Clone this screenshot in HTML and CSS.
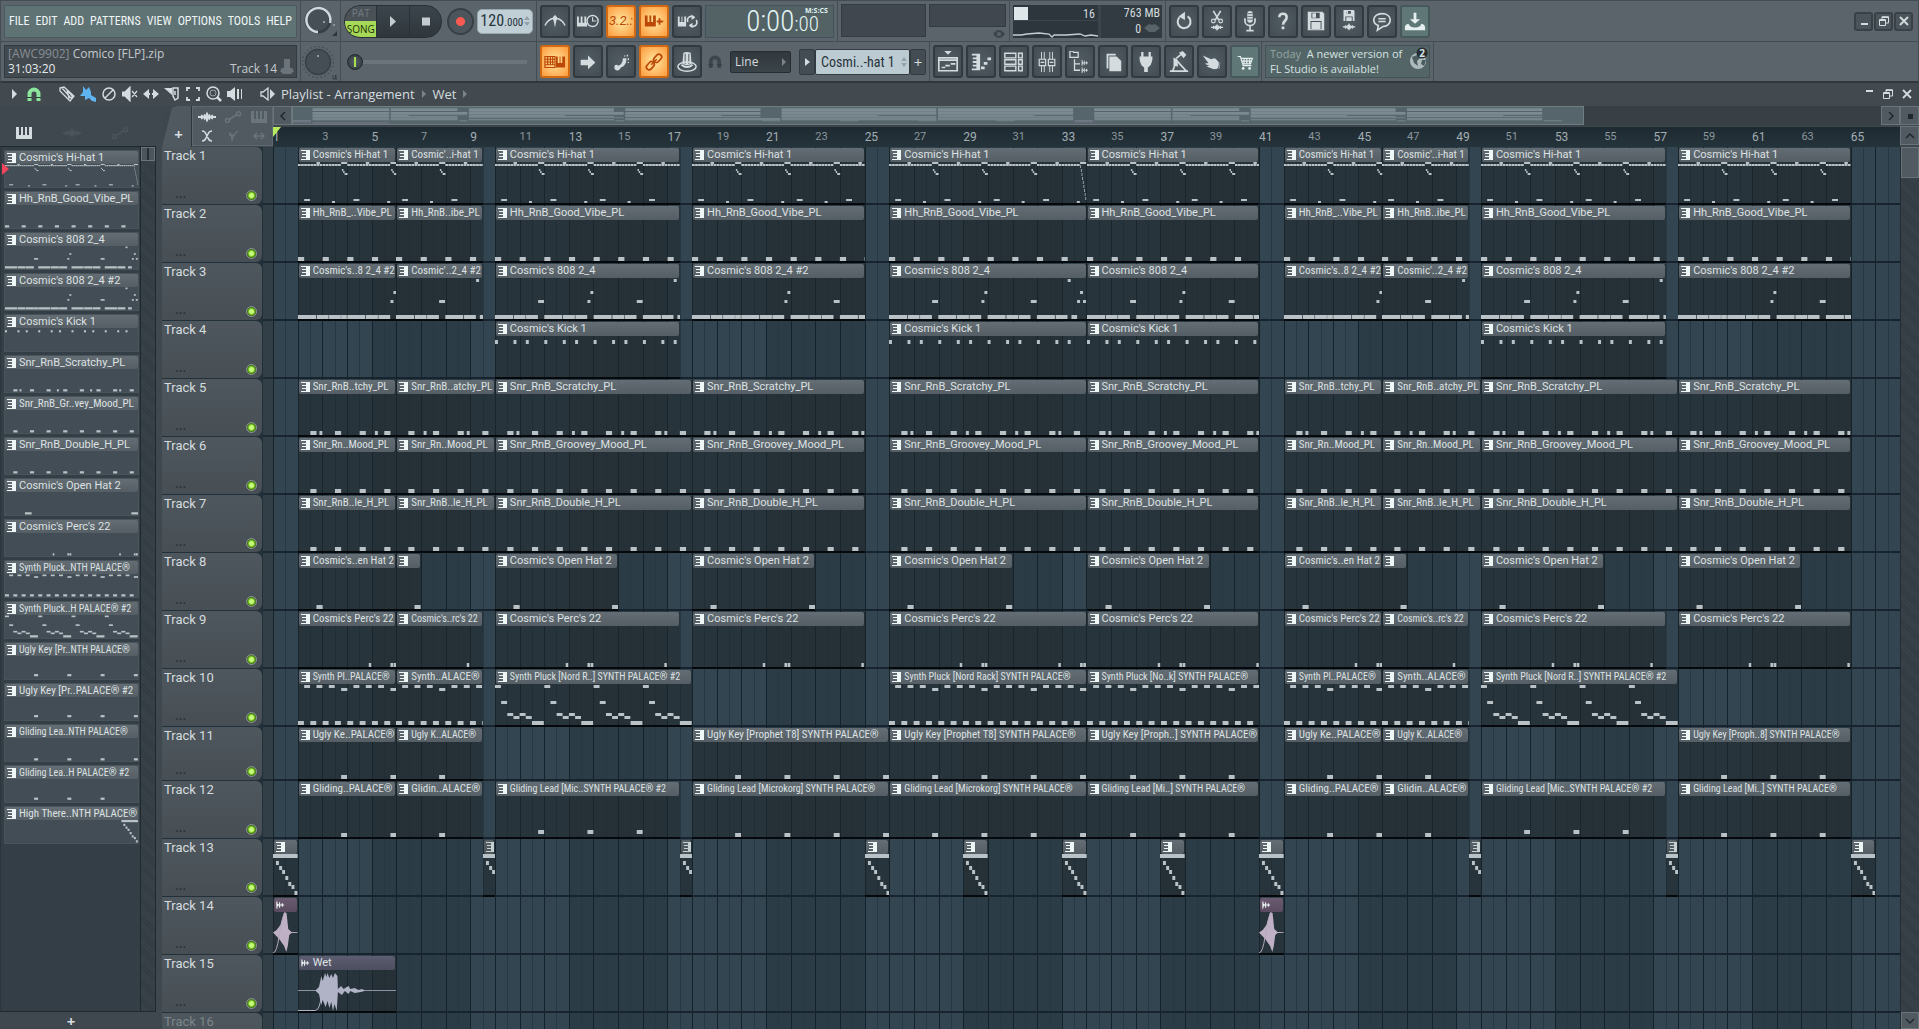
FILE: index.html
```html
<!DOCTYPE html>
<html lang="en">
<head>
<meta charset="utf-8">
<title>Comico [FLP].zip</title>
<link rel="stylesheet" href="styles.css">
</head>
<body>
<svg class="defs" aria-hidden="true">
  <symbol id="clip-icon" viewBox="0 0 9 10"><path d="M0 0h9v10H0V9h5V7H1V6h4V4H1V3h4V1H0z"/></symbol>
  <symbol id="wave-mark" viewBox="0 0 10 10"><path d="M1 1v8M4 2v6M4 5h5M7 3v4" fill="none" stroke="currentColor" stroke-width="1.2"/><path d="M1 3l3 2-3 2z"/></symbol>
  <symbol id="keys" viewBox="0 0 16 12"><path d="M0 0h3v8h2V0h2v8h2V0h2v8h2V0h3v12H0z"/></symbol>
  <symbol id="wave" viewBox="0 0 20 12"><path d="M0 5l3 0 1-2 2 2 1-3 1 2 2-4 2 4 1-2 1 3 2-2 1 2 3 0v2h-3l-1 2-2-2-1 3-1-2-2 4-2-4-1 2-1-3-2 2-1-2H0z"/></symbol>
  <symbol id="auto" viewBox="0 0 18 12"><path d="M5 8.500l8-5" stroke="currentColor" stroke-width="1.500"/><circle cx="3.500" cy="9.500" r="2" fill="none" stroke="currentColor" stroke-width="1.500"/><circle cx="14.500" cy="2.800" r="2" fill="none" stroke="currentColor" stroke-width="1.500"/></symbol>
  <symbol id="magnet" viewBox="0 0 14 15"><path d="M2.500 14V7a4.500 4.500 0 0 1 9 0v7" fill="none" stroke="currentColor" stroke-width="4"/><path d="M0 10.500h5M9 10.500h5" stroke="#31393f" stroke-width="1"/></symbol>
  <symbol id="restore" viewBox="0 0 10 10"><path d="M.5 3.500h6v6h-6zM.5 4.500h6M3 3V.7h6.500V7H7M3 1.500h6" fill="none" stroke="currentColor"/></symbol>
  <symbol id="cross" viewBox="0 0 10 10"><path d="M1 1l8 8M9 1L1 9" stroke="currentColor" stroke-width="1.800"/></symbol>
  <symbol id="updown" viewBox="0 0 6 10"><path d="M0 4l3-4 3 4zM0 6l3 4 3-4z"/></symbol>
</svg>

<header class="toolbar">
  <div class="bar">
    <div class="cell w-main"><nav class="menu"><a href="#">FILE</a><a href="#">EDIT</a><a href="#">ADD</a><a href="#">PATTERNS</a><a href="#">VIEW</a><a href="#">OPTIONS</a><a href="#">TOOLS</a><a href="#">HELP</a></nav></div>
    <div class="cell w-knob"><button class="knob" aria-label="Main volume"><svg viewBox="0 0 36 36"><circle cx="17" cy="17" r="10.500" fill="#464f56"/><circle cx="17" cy="17" r="12" fill="none" stroke="#363e44" stroke-width="3"/><path d="M17 29a12 12 0 1 1 12-9" fill="none" stroke="#cfd9dd" stroke-width="2.500"/><circle cx="23" cy="19" r="1" fill="#aab5bb"/><circle cx="33" cy="22" r="1" fill="#98a3a9"/><path d="M36 28v5h-5z" fill="#2f373c"/></svg></button></div>
    <div class="cell w-play">
      <div class="transport">
        <div class="mode"><button class="pat">PAT</button><button class="song">SONG</button></div>
        <button aria-label="Play"><svg viewBox="0 0 24 24"><path d="M9 7l6 5.500L9 18z"/></svg></button>
        <button aria-label="Stop"><svg viewBox="0 0 24 24"><path d="M8 8.500h8v8H8z"/></svg></button>
      </div>
      <button class="record" aria-label="Record"></button>
      <button class="tempo"><span>120<small>.000</small></span><svg><use href="#updown"/></svg></button>
    </div>
    <div class="cell w-time">
      <button class="tb" aria-label="Metronome"><svg viewBox="0 0 24 24"><path d="M1 17q3-7 10-8M23 17q-3-7-10-8" fill="none" stroke="currentColor" stroke-width="1.500"/><path d="M12 5l2 4-2 10-2-10z"/><circle cx="12" cy="9" r="2.500"/></svg></button>
      <button class="tb" aria-label="Wait for input"><svg viewBox="0 0 24 24"><path d="M0 7h2v7h2V7h2v7h2V7h2v7h1v4H0z"/><circle cx="17" cy="12" r="6" fill="#454f55" stroke="currentColor" stroke-width="1.500"/><path d="M17 8v4h4" fill="none" stroke="currentColor" stroke-width="1.200"/></svg></button>
      <button class="tb on count">3.2.:</button>
      <button class="tb on" aria-label="Blend recording"><svg viewBox="0 0 24 24"><path d="M2 6h3v7h2V6h2v7h2V6h3v12H2z"/><path d="M18 9v7M15 12.500h7" stroke="currentColor" stroke-width="2"/></svg></button>
      <button class="tb" aria-label="Loop recording"><svg viewBox="0 0 24 24"><path d="M2 7h2v6h2V7h1v6h2V7h2v11H2z"/><path d="M13 13a4 4 0 0 1 7-4M22 11a4 4 0 0 1-7 5" fill="none" stroke="currentColor" stroke-width="1.800"/><path d="M17 5l4 3-4 3zM18 14l-4 3 4 3z"/></svg></button>
      <div class="clock"><em>M:S:CS</em><span>0:00<small>:00</small></span></div>
    </div>
    <div class="cell w-scope"><div class="scope big"></div><div class="scope small"></div><svg class="eye" viewBox="0 0 12 10"><path d="M0 5q6-8 12 0q-6 8-12 0z"/><circle cx="6" cy="5" r="2" fill="#5b646b"/></svg></div>
    <div class="cell w-cpu">
      <div class="cpu">
        <svg class="meter" viewBox="0 0 85 33"><path d="M1 2h14v13H1z" fill="#dfe6e9"/><path d="M0 15.500h85" stroke="#3b454b"/><path d="M0 30h8l6-1 12-1 10 1 3 3 2-2 12 0 14-1 5 2 6-1 7 1" fill="none" stroke="#c4cdd1" stroke-width="1.300"/></svg>
        <span class="voices">16</span>
        <div class="mem"><span>763 MB</span><span>0 <svg viewBox="0 0 16 10"><path d="M0 5l5-4 3 1 3-1 5 4-5 4H5z"/></svg></span></div>
      </div>
    </div>
    <div class="cell grow">
      <button class="tb" aria-label="Undo"><svg viewBox="0 0 24 24"><path d="M7 8a7 7 0 1 0 9-1" fill="none" stroke="currentColor" stroke-width="2.200"/><path d="M13 2v9L6 7z"/></svg></button>
      <button class="tb" aria-label="Cut"><svg viewBox="0 0 24 24"><path d="M8 1l6 10M16 1l-6 10" stroke="currentColor" stroke-width="1.800"/><circle cx="8" cy="12" r="2" fill="none" stroke="currentColor" stroke-width="1.300"/><circle cx="16" cy="12" r="2" fill="none" stroke="currentColor" stroke-width="1.300"/><use href="#wave" x="5" y="15" width="14" height="8"/></svg></button>
      <button class="tb" aria-label="Record audio"><svg viewBox="0 0 24 24"><rect x="9" y="1" width="6" height="13" rx="3"/><path d="M6.500 9v3a5.500 5 0 0 0 11 0V9M12 17v5M8 22.500h8" fill="none" stroke="currentColor" stroke-width="1.800"/><path d="M9 4h6M9 7h6M9 10h6" stroke="#59636a"/></svg></button>
      <button class="tb" aria-label="Help"><svg viewBox="0 0 24 24"><path d="M8 8q0-4 4-4t4 4q0 2-2 4t-2 4" fill="none" stroke="currentColor" stroke-width="2.800"/><path d="M10.500 18h3v3h-3z"/></svg></button>
      <button class="tb" aria-label="Save"><svg viewBox="0 0 24 24"><path d="M3 2h16l2 2v18H3z"/><path d="M7 3h9v6H7zM6 12h12v9H6z" fill="#454f55"/><path d="M8 3.500h4v5H8zM7 13h10v8H7z"/></svg></button>
      <button class="tb" aria-label="Save new version"><svg viewBox="0 0 24 24"><path d="M6 0h11l1 1v11H6z"/><path d="M9 1h5v3H9zM8 7h8v5H8z" fill="#454f55"/><path d="M9 8h6v4H9zM9 1h2v3H9z"/><use href="#wave" x="5" y="14" width="14" height="9"/></svg></button>
      <button class="tb" aria-label="Chat"><svg viewBox="0 0 24 24"><path d="M12 4c5 0 9 2.500 9 7s-4 7-8 7l-6 4 1-5c-3-1-5-3-5-6 0-4.500 4-7 9-7z" fill="none" stroke="currentColor" stroke-width="1.800"/><path d="M8 9.500h8M8 12.500h8" stroke="currentColor" stroke-width="1.500"/></svg></button>
      <button class="tb teal" aria-label="Download"><svg viewBox="0 0 24 24"><path d="M10.500 3h3v7h4L12 15 6.500 10h4z"/><path d="M1 19q0-3 4-4 1 4 7 4t7-4q4 1 4 4v3H1z"/></svg></button>
      <div class="winbtns">
        <button aria-label="Minimize"><svg viewBox="0 0 10 10"><path d="M2 7h7v2H2z"/></svg></button>
        <button aria-label="Restore"><svg><use href="#restore"/></svg></button>
        <button aria-label="Close"><svg><use href="#cross"/></svg></button>
      </div>
    </div>
  </div>
  <div class="bar">
    <div class="cell w-main"><div class="hint"><div><i>[AWC9902]</i> Comico [FLP].zip</div><div class="hint-row"><b>31:03:20</b><span>Track 14</span></div><svg viewBox="0 0 14 16"><path d="M4 1h6v9h2l2 3-3 3H3l-3-3 2-3h2z"/></svg></div></div>
    <div class="cell w-knob"><button class="knob" aria-label="Main pitch"><svg viewBox="0 0 36 36"><circle cx="17" cy="18" r="15.500" fill="none" stroke="#454e55" stroke-width="1.500" stroke-dasharray="1.500 2.560"/><circle cx="17" cy="18" r="12.500" fill="#454e55" stroke="#373f45" stroke-width="1.500"/><circle cx="17" cy="12" r="1" fill="#aab5bb"/><path d="M32 31v4h5M34.500 31v4M36 31v4" stroke="#343c41" fill="none"/></svg></button></div>
    <div class="cell w-play"><input class="seek" type="range" min="0" max="100" value="0" aria-label="Song position"></div>
    <div class="cell w-snap">
      <button class="tb on" aria-label="Typing keyboard"><svg viewBox="0 0 24 24"><path d="M1 6h11v12H1zM1 9h11M1 12h11M1 15h11M4 6v9M7 6v9M9.500 6v9" fill="none" stroke="currentColor" stroke-width="1.300"/><path d="M13 6h2v7h2V6h1v7h2V6h3v12H13z"/></svg></button>
      <button class="tb" aria-label="Step"><svg viewBox="0 0 24 24"><path d="M4 9.500h8V5l8 7.500-8 7.500v-4.500H4z"/></svg></button>
      <button class="tb" aria-label="Slide"><svg viewBox="0 0 24 24"><path d="M5 16q2-2 4 0 5-1 5-8l4 0q0 8-6 10-2 4-5 3-3-1-2-5z"/><path d="M16 5v1M19 4v2M20 8v2M20 12v1" stroke="currentColor" stroke-width="1.500"/></svg></button>
      <button class="tb on" aria-label="Link"><svg viewBox="0 0 24 24"><g fill="none" stroke="currentColor" stroke-width="1.800"><rect x="11" y="5" width="10" height="6" rx="3" transform="rotate(-48 16 8)"/><rect x="3" y="13" width="10" height="6" rx="3" transform="rotate(-48 8 16)"/><path d="M9 15l6-6"/></g></svg></button>
      <button class="tb" aria-label="Touch"><svg viewBox="0 0 24 24"><path d="M8 2q4-2 8 0l1 12q-5 3-10 0z"/><path d="M10 3v11M14 3v11" stroke="#454f55"/><ellipse cx="12" cy="17" rx="10" ry="5" fill="none" stroke="currentColor" stroke-width="1.600"/><path d="M6 15q6 5 12 0" stroke="currentColor" fill="none" stroke-width="2"/></svg></button>
      <svg class="snapmag"><use href="#magnet"/></svg>
      <div class="snapbox"><select class="snap" aria-label="Snap"><option>Line</option></select><i class="tri"></i></div>
      <div class="pattern"><button aria-label="Pattern list"><svg viewBox="0 0 6 10"><path d="M1 1l5 4-5 4z"/></svg></button><button class="pname"><span>Cosmi..-hat 1</span><svg><use href="#updown"/></svg></button><button>+</button></div>
    </div>
    <div class="cell w-views">
      <button class="tb" aria-label="Playlist"><svg viewBox="0 0 24 24"><path d="M8 0h8l-4 4z"/><path d="M2 7.500h20v14H2zM2 10h20M5 18h4M9 16h5M15 14h5" fill="none" stroke="currentColor" stroke-width="1.800"/></svg></button>
      <button class="tb" aria-label="Piano roll"><svg viewBox="0 0 24 24"><path d="M2 3h9v18H2v-2h5v-2H3v-2h4v-2H3v-2h4V9H3V7h4V5H2zM12 17h4v3h-4zM15 12h4v3h-4zM19 7h4v3h-4z"/></svg></button>
      <button class="tb" aria-label="Channel rack"><svg viewBox="0 0 24 24"><path d="M2 2.500h12v5H2zM17 2.500h4v5h-4zM2 9.500h12v5H2zM17 9.500h4v5h-4zM2 16.500h12v5H2zM17 16.500h4v5h-4z" fill="none" stroke="currentColor" stroke-width="1.500"/></svg></button>
      <button class="tb" aria-label="Mixer"><svg viewBox="0 0 24 24"><path d="M6 1v8M9 1v8M6 16v7M9 16v7M15 1v8M18 1v8M15 16v7M18 16v7" stroke="currentColor" stroke-width="1"/><path d="M3.500 9h7v7h-7zM13.500 9h7v7h-7zM5 12.500h4M15 12.500h4" fill="none" stroke="currentColor" stroke-width="1.300"/></svg></button>
      <button class="tb" aria-label="Browser"><svg viewBox="0 0 24 24"><path d="M1 0h3l1 1.500h5V7H1zM6 9v12h6M6 14h6" fill="none" stroke="currentColor" stroke-width="1.400"/><use href="#wave-mark" x="12" y="9" width="11" height="8"/><use href="#wave-mark" x="12" y="17" width="11" height="8"/></svg></button>
      <button class="tb" aria-label="Project picker"><svg viewBox="0 0 24 24"><path d="M5 3h10v2H7v14H5z"/><path d="M8 6h8l5 5v11H8z"/></svg></button>
      <button class="tb" aria-label="Plugins"><svg viewBox="0 0 24 24"><path d="M8 1v6M16 1v6" stroke="currentColor" stroke-width="2.500"/><path d="M5 6h14v3q-1 7-5 9v5h-4v-5Q6 16 5 9z"/></svg></button>
      <button class="tb" aria-label="Tempo tapper"><svg viewBox="0 0 24 24"><path d="M5 22l3-8M9 8l5-4M9 10l11 12M2 22h20" fill="none" stroke="currentColor" stroke-width="1.800"/><path d="M12 2l4-2 4 4-3 4zM6 7l4 2 1 8-5-1z"/></svg></button>
      <button class="tb" aria-label="Touch control"><svg viewBox="0 0 24 24"><path d="M2 5l9 4 4-1 6 5-1 6-6 1-8-3 3-1-5-2 4-1z"/><path d="M18 9q4 5 0 11" fill="none" stroke="#454f55"/></svg></button>
      <button class="tb teal" aria-label="Shop"><svg viewBox="0 0 24 24"><path d="M4 6h3l3 10h9M7 8h13l-2 6H9M11 8v6M14 8v6M17 8v6M8 11h11" fill="none" stroke="currentColor" stroke-width="1.300"/><circle cx="10" cy="19" r="1.500"/><circle cx="17" cy="19" r="1.500"/></svg></button>
    </div>
    <div class="cell w-news"><div class="news"><div><i>Today</i>&nbsp; A newer version of<br>FL Studio is available!</div><svg viewBox="0 0 20 22"><circle cx="9" cy="13" r="8" fill="#aebbbd"/><path d="M3 9l5-2 3 3-3 3 1 5-4-3zM13 12l4 0-2 6-3-2z" fill="#4c5c5f"/><circle cx="13" cy="5" r="5.500" fill="#252d32"/></svg><b>2</b></div></div>
    <div class="cell grow"></div>
  </div>
</header>

<section class="titlebar">
  <svg class="ti dim" viewBox="0 0 16 16"><path d="M7 3l5 5-5 5z"/></svg>
  <svg class="ti green" viewBox="0 0 16 16"><use href="#magnet" x="1" y="1" width="14" height="15"/></svg>
  <span class="spacer"></span>
  <svg class="ti" viewBox="0 0 16 16"><path d="M1 2l4-1 10 9-4 5L1 5zM3 2l8 9M8 4l6 7-4 1z" fill="none" stroke="currentColor" stroke-width="1.300"/></svg>
  <svg class="ti blue" viewBox="0 0 16 16"><path d="M3 0l3 4 3-3 2 5 0 3 5 3v4l-4-1-3-3-4 2 0-4-5 0 3-4z"/></svg>
  <svg class="ti" viewBox="0 0 16 16"><circle cx="8" cy="8" r="6" fill="none" stroke="currentColor" stroke-width="1.500"/><path d="M4 12l8-8" stroke="currentColor" stroke-width="1.500"/></svg>
  <svg class="ti" viewBox="0 0 16 16"><path d="M0 6h3l5-5v14l-5-5H0zM10 5l5 6M15 5l-5 6" stroke="currentColor" stroke-width="1.200"/></svg>
  <svg class="ti" viewBox="0 0 16 16"><path d="M0 8l6-5v4h1v2H6v4zM16 8l-6-5v4H9v2h1v4z"/></svg>
  <svg class="ti" viewBox="0 0 16 16"><path d="M0 2h8v7z"/><path d="M9 2h5v10l-3 2-2-4zM11 5v4" fill="none" stroke="currentColor" stroke-width="1.500"/></svg>
  <svg class="ti" viewBox="0 0 16 16"><path d="M2 5V2h3M11 2h3v3M14 11v3h-3M5 14H2v-3" fill="none" stroke="currentColor" stroke-width="1.800"/></svg>
  <svg class="ti" viewBox="0 0 16 16"><circle cx="7" cy="7" r="6" fill="none" stroke="currentColor" stroke-width="1.500"/><circle cx="7" cy="7" r="3" fill="none" stroke="currentColor" opacity=".6"/><path d="M11 11l4 4" stroke="currentColor" stroke-width="2.500"/></svg>
  <svg class="ti" viewBox="0 0 16 16"><path d="M0 5h3l5-4v14l-5-4H0zM10 3h2v10h-2zM14 3h1v10h-1z"/></svg>
  <span class="spacer"></span>
  <svg class="ti" viewBox="0 0 16 16"><path d="M1 6h2l5-4v12l-5-4H1z" fill="none" stroke="currentColor" stroke-width="1.300"/><path d="M10 3l5 5-5 5z"/></svg>
  <span class="crumb">Playlist - Arrangement</span><i class="tri"></i><span class="crumb">Wet</span><i class="tri"></i>
  <div class="winmini"><button aria-label="Minimize playlist"><svg viewBox="0 0 10 10"><path d="M2 1h7v2H2z"/></svg></button><button aria-label="Restore playlist"><svg><use href="#restore"/></svg></button><button aria-label="Close playlist"><svg><use href="#cross"/></svg></button></div>
</section>

<main class="playlist">
  <aside class="picker">
    <div class="picker-tabs"><svg><use href="#keys"/></svg><svg class="off"><use href="#wave"/></svg><svg class="off"><use href="#auto"/></svg></div>
    <div class="picker-body"><ul id="patterns"></ul><div class="pscroll"><i></i></div></div>
    <button class="add" aria-label="Add pattern">+</button>
  </aside>
  <section class="arrange">
    <div class="head">
      <button class="addtrack" aria-label="Add track">+</button>
      <div class="kinds"><svg><use href="#wave"/></svg><svg class="off"><use href="#auto"/></svg><svg class="off"><use href="#keys"/></svg><svg viewBox="0 0 18 12"><path d="M4 1q3 0 4 3l2 4q1 3 4 3M14 1q-3 0-4 3L8 8q-1 3-4 3" fill="none" stroke="currentColor" stroke-width="1.500"/></svg><svg class="off2" viewBox="0 0 18 12"><path d="M5 3q3 0 3 8 1-7 6-10M5 5h6" fill="none" stroke="currentColor" stroke-width="1.300"/></svg><svg class="off2" viewBox="0 0 18 12"><path d="M4 6h10M7 3L4 6l3 3M11 3l3 3-3 3" fill="none" stroke="currentColor" stroke-width="1.500"/></svg></div>
      <div class="timeline">
        <div class="scroller"><button class="sb" aria-label="Scroll left"><svg viewBox="0 0 10 10"><path d="M7 1L3 5l4 4" fill="none" stroke="currentColor" stroke-width="1.500"/></svg></button><div class="strip"><svg id="overview" viewBox="0 0 66 19" preserveAspectRatio="none"></svg></div><button class="sb" aria-label="Scroll right"><svg viewBox="0 0 10 10"><path d="M3 1l4 4-4 4" fill="none" stroke="currentColor" stroke-width="1.500"/></svg></button></div>
        <div class="ruler" id="ruler"></div>
      </div>
      <div class="corner"><button class="sb" aria-label="Zoom"><svg viewBox="0 0 10 10"><path d="M3 3h5v5H3z"/></svg></button><button class="sb" aria-label="Scroll up"><svg viewBox="0 0 10 10"><path d="M1 7l4-4 4 4" fill="none" stroke="currentColor" stroke-width="1.500"/></svg></button></div>
    </div>
    <div class="body">
      <div class="tracks" id="tracks"></div>
      <div class="vscroll"><div class="thumb"></div><button class="sb" aria-label="Scroll down"><svg viewBox="0 0 10 10"><path d="M1 3l4 4 4-4" fill="none" stroke="currentColor" stroke-width="1.500"/></svg></button></div>
    </div>
  </section>
</main>
<script src="script.js"></script>
</body>
</html>
```
FILE: styles.css
```css
:root {
  --ui: "Open Sans", "Noto Sans", sans-serif;
  --narrow: "Roboto Condensed", "Noto Sans CJK JP", "Roboto", sans-serif;
  --label: "Roboto", sans-serif;
  --panel: #5b646b;
  --line: #454d54;
  --ink: #d5dcdf;
}
* { box-sizing: border-box; }
body { margin: 0; height: 100vh; display: flex; flex-direction: column; overflow: hidden; background: #3f474e; color: var(--ink); font: 12px/16px var(--ui); }
button, select, input { font: inherit; color: inherit; margin: 0; padding: 0; border: 0; background: none; }
a { color: inherit; text-decoration: none; }
i, em { font-style: normal; }
svg { fill: currentColor; display: block; flex: none; }
.defs { position: absolute; width: 0; height: 0; }

/* main toolbar */
.toolbar { background: var(--panel); border: 1px solid var(--line); border-bottom: 2px solid #30383d; flex: none; }
.bar { display: flex; height: 40px; }
.bar + .bar { border-top: 1px solid var(--line); }
.cell { display: flex; align-items: center; gap: 3px; padding: 0 3px; border-right: 1px solid var(--line); flex: none; }
.w-main { width: 300px; }
.w-knob { width: 40px; padding: 0; }
.w-play { width: 196px; }
.w-time { width: 301px; }
.w-scope { width: 172px; align-items: flex-start; padding-top: 3px; position: relative; }
.w-cpu { width: 156px; }
.w-snap { width: 393px; }
.w-views { width: 332px; }
.w-news { width: 172px; }
.cell.grow { flex: 1; border-right: 0; }
.menu { flex: 1; height: 33px; display: flex; align-items: center; justify-content: space-between; padding: 0 4px; background: #5f7375; border: 1px solid #4a5a5d; color: #f0f6f6; font: 12px/30px var(--narrow); }
.hint { position: relative; flex: 1; height: 33px; background: #42494f; border: 1px solid #333a40; padding: 0 3px; line-height: 15px; color: #c3cacd; }
.hint i { color: #878f94; }
.hint b { font-weight: 400; color: #e4eaec; }
.hint-row { display: flex; justify-content: space-between; padding-right: 16px; }
.hint svg { position: absolute; right: 2px; bottom: 3px; width: 14px; height: 16px; color: #6b747a; }
.knob svg { width: 36px; height: 36px; }
.transport { display: flex; height: 33px; width: 99px; border-radius: 16px; overflow: hidden; background: linear-gradient(#3c454b, #2f373d); border: 1px solid #2a3136; color: #c5ccd0; }
.transport > * { flex: 1; border-right: 1px solid #293036; display: flex; align-items: center; justify-content: center; }
.transport > :last-child { border: 0; }
.transport svg { width: 24px; height: 24px; }
.transport .mode { flex-direction: column; align-items: stretch; font: 10px/16px var(--ui); }
.mode button { flex: 1; }
.pat { background: #4a5258; color: #727b80; }
.song { background: #a6d957; color: #1f3008; }
.record { width: 27px; height: 27px; border-radius: 50%; border: 2px solid #373f45; background: radial-gradient(circle, #fb5a50 4px, #4c555b 5px); margin-left: 2px; flex: none; }
.tempo { display: flex; align-items: center; justify-content: space-between; width: 56px; height: 25px; padding: 0 2px; border-radius: 5px; background: #c0cfd6; color: #27343b; border: 1px solid #98a6ad; font: 16px/23px var(--narrow); white-space: nowrap; }
.tempo small { font-size: 11px; }
.tempo svg, .pname svg { width: 6px; height: 10px; color: #94a2a9; }
.tb { width: 30px; height: 33px; flex: none; display: flex; align-items: center; justify-content: center; border-radius: 3px; border: 2px solid #323a40; background: radial-gradient(#525c63, #434c53); color: #d5dcdf; }
.tb svg { width: 22px; height: 22px; }
.tb.on { border-color: #d26a14; background: radial-gradient(#ffe79f, #fd9a3c); color: #bb4806; }
.tb.teal { border-color: #46585a; background: #5f7776; color: #e6efef; }
.tb.count { font: italic 13px/20px var(--label); }
.clock { width: 129px; height: 33px; background: #526265; border: 1px solid #43525a; display: flex; flex-direction: row-reverse; align-items: flex-start; color: #e2f3f2; font: 300 29px/31px var(--narrow); }
.clock small { font-size: 21px; }
.clock em { width: 26px; margin: 1px 2px 0 -14px; font: 700 7px/7px var(--ui); }
.scope { background: #40474e; border: 1px solid #343b41; }
.scope.big { width: 86px; height: 33px; }
.scope.small { width: 78px; height: 23px; }
.eye { position: absolute; right: 4px; bottom: 2px; width: 12px; height: 10px; color: #3c454b; }
.cpu { flex: 1; height: 33px; display: flex; background: #2d363d; position: relative; font: 12px/16px var(--narrow); }
.meter { width: 85px; height: 33px; }
.voices { position: absolute; left: 70px; top: 1px; }
.mem { flex: 1; background: #323b41; text-align: right; display: flex; flex-direction: column; padding-right: 2px; border-left: 3px solid #3b454b; }
.mem svg { display: inline; width: 16px; height: 10px; color: #59636a; }
.winbtns { margin-left: auto; display: flex; gap: 1px; padding-right: 2px; }
.winbtns button { width: 19px; height: 19px; display: grid; place-items: center; border: 2px solid #394147; border-radius: 3px; background: #4b545a; }
.winbtns svg, .winmini svg { width: 10px; height: 10px; }
.seek { appearance: none; width: 180px; height: 24px; margin-left: 3px; background: linear-gradient(#6b747b, #6b747b) center / 100% 4px no-repeat; }
.seek::-webkit-slider-thumb { appearance: none; width: 16px; height: 16px; border-radius: 50%; border: 1px solid #21282c; background: linear-gradient(90deg, transparent 6px, #a9e04f 6px 8px, transparent 8px) center / 100% 10px no-repeat, radial-gradient(#576067, #2d353a); }
.snapmag { width: 14px; height: 14px; margin: 0 5px 0 3px; color: #3c454b; }
.snapbox { display: flex; align-items: center; width: 62px; height: 22px; padding-right: 4px; border: 1px solid #262d32; border-radius: 2px; background: linear-gradient(#31393e, #3b444a); }
.snap { appearance: none; flex: 1; padding: 0 4px; line-height: 20px; }
.pattern { display: flex; margin-left: 5px; height: 26px; }
.pattern button { width: 16px; background: #434c53; border: 1px solid #333b41; display: grid; place-items: center; border-radius: 2px; font-size: 15px; }
.pattern button svg { width: 6px; height: 10px; }
.pattern .pname { width: 95px; display: flex; align-items: center; justify-content: space-between; padding: 0 2px 0 5px; background: #bccbd2; color: #27343b; font: 14px/24px var(--narrow); white-space: nowrap; }
.news { position: relative; flex: 1; height: 33px; background: #536566; border: 1px solid #445456; padding: 0 4px; line-height: 15px; color: #d6e3e2; font-size: 11px; }
.news i { color: #95a5a5; }
.news svg { position: absolute; right: 0; top: 1px; width: 20px; height: 24px; }
.news b { position: absolute; right: 4px; top: 0; font-size: 10px; line-height: 14px; }

/* playlist title */
.titlebar { display: flex; align-items: center; gap: 5px; height: 23px; padding: 0 7px 2px 5px; flex: none; font-size: 13px; background: #424a50; }
.ti { width: 16px; height: 16px; }
.green { color: #8be59a; }
.blue { color: #5fb3ee; }
.spacer { width: 7px; }
.tri { border: 4px solid transparent; border-left-color: #79838a; border-right: 0; }
.crumb { line-height: 20px; padding-right: 2px; }
.crumb + .tri + .crumb { padding-left: 2px; }
.winmini { margin-left: auto; display: flex; gap: 9px; }

/* pattern picker */
.playlist { flex: 1; min-height: 0; display: flex; }
.picker { width: 162px; flex: none; display: flex; flex-direction: column; padding-right: 6px; background: #3f484e; }
.picker-tabs { height: 40px; display: flex; align-items: flex-end; gap: 30px; padding: 0 15px 7px; }
.picker-tabs svg { width: 18px; height: 12px; }
.off { color: #555f66; }
.off2 { color: #6a747b; }
.picker-tabs .off { color: #4b545b; }
.picker-body { flex: 1; min-height: 0; display: flex; border: 1px solid #20292e; border-left: 1px solid #2d353a; background: #343e46; }
#patterns { list-style: none; margin: 0; padding: 3px 1px 0 3px; width: 139px; display: flex; flex-direction: column; gap: 3px; overflow: hidden; }
#patterns li { height: 38px; flex: none; border: 1px solid #49535a; background: #424d55; position: relative; }
#patterns .name { height: 13px; }
#patterns .notes { width: 100%; height: 23px; }
#patterns li:first-child::before { content: ""; position: absolute; left: -3px; top: 12px; border: 6px solid transparent; border-left: 7px solid #f0455c; border-right: 0; }
.pscroll { flex: 1; border-left: 1px solid #20292e; background: repeating-linear-gradient(45deg, #3a434a 0 1px, #323b41 1px 2px); }
.pscroll i { display: block; height: 14px; border: 1px solid #6a747b; background: linear-gradient(90deg, #4b555b 5px, #272f34 5px 7px, #4b555b 7px); }
.add { height: 17px; font: 700 15px/16px var(--ui); padding-right: 14px; }

.name { height: 14px; display: flex; align-items: center; gap: 3px; padding-left: 2px; overflow: hidden; white-space: nowrap; border-radius: 2px; background: linear-gradient(#636d73, #545e64); color: #dde1e3; font: 11px/14px var(--label); }
.name svg { width: 9px; height: 10px; color: #eef6f6; }
.name.fit-a { font: 11px/14px var(--narrow); }
.name.fit-b { font: 10px/14px var(--narrow); }
.notes { fill: #b9c3c7; }

/* arrangement */
.arrange { flex: 1; min-width: 0; display: flex; flex-direction: column; }
.head { display: flex; height: 41px; flex: none; }
.addtrack { width: 30px; background: #4f595f; border-right: 1px solid #2c353a; clip-path: polygon(0 100%, 33% 5%, 50% 0, 100% 0, 100% 100%); font: 700 15px/16px var(--ui); padding-top: 14px; padding-left: 4px; }
.kinds { width: 81px; display: grid; grid-template-columns: repeat(3, 26px); place-items: center; padding-left: 1px; background: #505a60; border: 1px solid #5f696f; margin-bottom: 1px; }
.kinds svg { width: 18px; height: 12px; }
.kinds .off { color: #6b757c; }
.timeline { flex: 1; min-width: 0; }
.scroller { display: flex; height: 20px; }
.strip { flex: 1; background: #384046; }
#overview { width: 81.300%; height: 19px; background: #56656b; border: 1px solid #6f7c82; }
.sb { width: 19px; height: 19px; display: grid; place-items: center; border: 1px solid #69737a; background: #505a60; color: #20282d; flex: none; }
.sb svg { width: 10px; height: 10px; }
.ruler { height: 20px; margin-top: 1px; display: grid; grid-template-columns: repeat(33, minmax(0, 1fr)); background: linear-gradient(#1e2a31, #25333b); color: #8b979d; font: 11px/20px var(--label); position: relative; }
.ruler span { white-space: nowrap; }
.ruler span.four { font-size: 12px; color: #a3aeb3; }
.ruler::before { content: ""; position: absolute; left: 0; top: 0; border-top: 10px solid #b6ec5c; border-right: 8px solid transparent; }
.corner { width: 19px; display: flex; flex-direction: column; gap: 1px; }
.body { flex: 1; min-height: 0; display: flex; }
.tracks { flex: 1; min-width: 0; overflow: hidden; }
.track { display: flex; height: 58px; background: #22303a; }
.track.short { height: 54px; }
.thead { width: 100px; flex: none; margin: 0 1px 1px 0; padding: 1px 5px 3px 2px; border-radius: 0 6px 6px 0; background: linear-gradient(#4e575d, #474f55); display: grid; grid-template-columns: 1fr 11px; align-content: space-between; font: 13px/16px var(--label); }
.thead label { grid-column: 1 / 3; }
.thead.dim { color: #7b858b; }
.thead small { padding-left: 11px; color: #2b3439; font: 700 13px/8px var(--label); }
.led { width: 11px; height: 11px; border-radius: 50%; border: 1px solid #8d989c; background: radial-gradient(#c5f97a 2px, #76bf25 3px, #24400a 5px); appearance: none; margin: 0; }
.pre { width: 10px; flex: none; background: #323f47; border-bottom: 2px solid #1d2a32; }
.lane {
  flex: 1; min-width: 0; display: grid; grid-template-columns: repeat(132, minmax(0, 1fr)); padding-top: 1px;
  background:
    linear-gradient(#17242d, #17242d) bottom / 100% 2px no-repeat,
    repeating-linear-gradient(90deg, #14222c 0 1px, transparent 1px calc(100% / 66)),
    repeating-linear-gradient(90deg, #263843 0 1px, transparent 1px calc(100% / 132)),
    repeating-linear-gradient(90deg, #334550 0 calc(400% / 66), #2c3c47 calc(400% / 66) calc(800% / 66));
}
.clip { grid-row: 1; min-width: 0; background: rgba(32, 39, 43, .56); border-bottom: 2px solid #05090c; }
.clip .notes { width: 100%; height: 41px; }
.short .clip .notes { height: 37px; }
.clip .name { margin: 0 1px; }
.clip.half .name { opacity: .8; }
.clip.violet .name { background: linear-gradient(#6a5b70, #5a4b61); }
.clip.violet .notes { fill: #bfb0c6; }
.clip.slate .name { background: linear-gradient(#5c5d70, #4d4e60); }
.clip.slate .notes { fill: #b0b2c6; }
.vscroll { width: 19px; flex: none; display: flex; flex-direction: column; justify-content: space-between; border-left: 1px solid #242c31; background: repeating-linear-gradient(45deg, #3a434a 0 1px, #323b41 1px 2px); }
.vscroll .thumb { height: 31px; border: 1px solid #69737a; background: #505a60; }
.vscroll .sb { width: 18px; height: 17px; }
```
FILE: script.js
```js
// A note is [start in bars, length in bars, top, height]; tops are measured from the lane's upper edge.
const row = (starts, len, y, h = 4) => starts.map(x => [x, len, y, h]);
const repeat = (count, step, make) => Array.from({ length: count }, (_, i) => make(i * step)).flat();

const bass = [[0, .73], [.76, .48], [1.26, .48]];
const bassLine = closed => [
  ...bass, ...(closed ? [[1.75, .23]] : []), [2, .73], [2.76, .48], [3.26, .48],
  [4, .73], [4.76, .48], [5.26, .48], [6, .73], [6.76, .48], [7.4, .23]
].map(([x, w]) => [x, w, 53, 4]);
const bassFills = [[3.75, .12, 38, 3], [3.87, .12, 29, 3], [5.75, .24, 38, 3], [7.25, .12, 17, 3], [7.63, .12, 38, 3], [7.75, .12, 29, 3], [7.87, .12, 38, 3]];

const notes = {
  hat: [
    ...repeat(64, .125, x => (x % 2 >= 1.75 ? [] : [[x, .11, 18, 2]])),
    ...repeat(4, 2, x => [[x + .75, .14, 16, 2], [x + 1.75, .25, 16, 2]]),
    ...repeat(3, 2, x => [[x + 1.78, .06, 23, 2], [x + 1.83, .06, 25, 2], [x + 1.89, .12, 27, 2]]),
    ...row([.25, 2.25, 4.25, 6.25], .24, 53, 2), ...row([1.38, 3.62, 5.38, 7.62], .12, 55, 2),
    ...repeat(9, 1, i => [[7.76 + i * .026, .03, 19 + i * 4, 3]])
  ],
  vibe: row([0, 1, 2, 3, 4, 5, 6, 7], .25, 53),
  bass: [...bassLine(false), [1.75, .24, 38, 3], ...bassFills],
  bass2: [...bassLine(true), ...bassFills],
  kick: row([0, .75, 1.25, 2, 2.75, 3.25, 4, 4.75, 5.25, 6, 6.75, 7.25], .12, 20),
  scratchy: [...row([.5, 1.5, 2.5, 3.5, 4.5, 5.5, 6.5, 7.5], .25, 53), ...row([.87, 3.12, 5.12, 6.87], .12, 53)],
  snare: row([.5, 1.5, 2.5, 3.5, 4.5, 5.5, 6.5, 7.5], .25, 53),
  open: row([.75, 4.75], .25, 53),
  openPick: row([1.2, 7.6], .4, 53),
  perc: [...row([2.87, 6.87], .1, 53), ...row([3.75, 3.88, 7.75, 7.88], .11, 53)],
  pluck: [...repeat(4, 2, x => [...row([x + .25, x + .75, x + 1.25], .24, 17, 3), [x + 1.75, .25, 20, 3]]), ...repeat(16, .5, x => [[x, .24, 53, 4]])],
  pluck2: repeat(4, 2, x => [[x, .24, 17, 3], [x + .25, .24, 33, 3], [x + .5, .24, 45, 3], [x + .75, .24, 48, 3], [x + 1, .24, 45, 3], [x + 1.25, .24, 48, 3], [x + 1.5, .48, 53, 4]]),
  ugly: row([1.75, 3.75, 5.75, 7.75], .24, 49),
  lead: row([1.75, 3.75, 5.75, 7.75], .24, 53),
  lead2: row([1.75, 3.75, 5.75], .24, 50),
  high: [[0, 1, 16, 4], [.12, .12, 23, 4], [.25, .12, 28, 4], [.37, .12, 32, 4], [.5, .12, 38, 4], [.62, .12, 44, 4], [.75, .12, 47, 4], [.87, .12, 53, 4]]
};
notes.highPick = notes.high.map(([x, w, y, h]) => [7 + x, w, y, h]);

const waves = {
  riser: '<path d="M0 36.500L.15 34 .3 29 .4 21 .46 16 .55 17 .62 33 .75 36 1 36.300v.6L.75 37 .66 39 .6 50 .54 56 .45 50 .25 43z"/><path d="M0 57Q.15 57 .25 40 .35 24 .46 17" fill="none" stroke="#b5a8bc" stroke-width="1" vector-effect="non-scaling-stroke"/>',
  wet: '<path d="M0 36.200H.72L.85 33 .95 22 1 27 1.100 19 1.150 23 1.200 19 1.270 24 1.350 20 1.420 24 1.500 19 1.600 22 1.620 35 1.750 32 1.850 35 2.050 32 2.120 35 2.300 34 2.450 36 2.600 35 2.700 36.200H4v.8H2.700L2.550 38 2.300 39 2.120 37 2.050 40 1.900 37 1.780 41 1.620 38 1.570 57 1.480 50 1.420 57 1.350 48 1.270 54 1.200 47 1.120 53 1 46 .95 51 .85 40 .72 37H0z"/><path d="M0 56.500H.7Q.9 56 .95 40" fill="none" stroke="#b0b2c6" stroke-width="1" vector-effect="non-scaling-stroke"/>'
};

// Clips are [first bar, bars, name, pattern, offset into the pattern].
const pair = (a, b, key, len = 3.5, c = 4) => [2, 42].flatMap(bar => [[bar, c, a, key, 0], [bar + 4, len, b, key, 4]]);
const full = (bars, name, key) => bars.map(([bar, len]) => [bar, len, name, key, 0]);
const std = [[10, 7.5], [18, 7], [26, 8], [34, 7], [50, 7.5], [58, 7]];
const wide = [[10, 8], [18, 7], [26, 8], [34, 7], [50, 8], [58, 7]];

const lanes = [
  [...pair("Cosmic's Hi-hat 1", "Cosmic'..i-hat 1", 'hat'), ...full(std, "Cosmic's Hi-hat 1", 'hat')],
  [...pair('Hh_RnB_..Vibe_PL', 'Hh_RnB..ibe_PL', 'vibe'), ...full(std, 'Hh_RnB_Good_Vibe_PL', 'vibe')],
  [...pair("Cosmic's..8 2_4 #2", "Cosmic'..2_4 #2", 'bass2'), ...full([[10, 7.5], [26, 8], [34, 7], [50, 7.5]], "Cosmic's 808 2_4", 'bass'), ...full([[18, 7], [58, 7]], "Cosmic's 808 2_4 #2", 'bass2')],
  full([[10, 7.5], [26, 8], [34, 7], [50, 7.5]], "Cosmic's Kick 1", 'kick'),
  [...pair('Snr_RnB..tchy_PL', 'Snr_RnB..atchy_PL', 'scratchy', 4), ...full(wide, 'Snr_RnB_Scratchy_PL', 'scratchy')],
  [...pair('Snr_Rn..Mood_PL', 'Snr_Rn..Mood_PL', 'snare', 4), ...full(wide, 'Snr_RnB_Groovey_Mood_PL', 'snare')],
  [...pair('Snr_RnB..le_H_PL', 'Snr_RnB..le_H_PL', 'snare', 4), ...full(wide, 'Snr_RnB_Double_H_PL', 'snare')],
  [...pair("Cosmic's..en Hat 2", '', 'open', 1), ...full([[10, 5], [18, 5], [26, 5], [34, 5], [50, 5], [58, 5]], "Cosmic's Open Hat 2", 'open')],
  [...pair("Cosmic's Perc's 22", "Cosmic's..rc's 22", 'perc'), ...full(std, "Cosmic's Perc's 22", 'perc')],
  [...pair('Synth Pl..PALACE®', 'Synth..ALACE®', 'pluck'), ...full([[10, 8], [50, 8]], 'Synth Pluck [Nord R..] SYNTH PALACE® #2', 'pluck2'), ...full([[26, 8]], 'Synth Pluck [Nord Rack] SYNTH PALACE®', 'pluck'), ...full([[34, 7]], 'Synth Pluck [No..k] SYNTH PALACE®', 'pluck')],
  [...pair('Ugly Ke..PALACE®', 'Ugly K..ALACE®', 'ugly'), ...full([[18, 8], [26, 8]], 'Ugly Key [Prophet T8] SYNTH PALACE®', 'ugly'), ...full([[34, 7]], 'Ugly Key [Proph..] SYNTH PALACE®', 'ugly'), ...full([[58, 7]], 'Ugly Key [Proph..8] SYNTH PALACE®', 'ugly')],
  [...pair('Gliding..PALACE®', 'Glidin..ALACE®', 'lead'), ...full([[10, 7.5], [50, 7.5]], 'Gliding Lead [Mic..SYNTH PALACE® #2', 'lead2'), ...full([[18, 8], [26, 8]], 'Gliding Lead [Microkorg] SYNTH PALACE®', 'lead'), ...full([[34, 7], [58, 7]], 'Gliding Lead [Mi..] SYNTH PALACE®', 'lead')],
  full([[1, 1], [9.5, .5], [17.5, .5], [25, 1], [29, 1], [33, 1], [37, 1], [41, 1], [49.5, .5], [57.5, .5], [65, 1]], '', 'high'),
  full([[1, 1], [41, 1]], '', 'riser'),
  full([[2, 4]], 'Wet', 'wet'),
  []
];

const picker = [
  ["Cosmic's Hi-hat 1", 'hat'], ['Hh_RnB_Good_Vibe_PL', 'vibe'], ["Cosmic's 808 2_4", 'bass'], ["Cosmic's 808 2_4 #2", 'bass2'],
  ["Cosmic's Kick 1", 'kick'], ['Snr_RnB_Scratchy_PL', 'scratchy'], ['Snr_RnB_Gr..vey_Mood_PL', 'snare'], ['Snr_RnB_Double_H_PL', 'snare'],
  ["Cosmic's Open Hat 2", 'openPick'], ["Cosmic's Perc's 22", 'perc'], ['Synth Pluck..NTH PALACE®', 'pluck'], ['Synth Pluck..H PALACE® #2', 'pluck2'],
  ['Ugly Key [Pr..NTH PALACE®', 'ugly'], ['Ugly Key [Pr..PALACE® #2', 'ugly'], ['Gliding Lea..NTH PALACE®', 'lead'], ['Gliding Lea..H PALACE® #2', 'lead2'],
  ['High There..NTH PALACE®', 'highPick']
];

const rects = key => waves[key] || notes[key].map(([x, w, y, h]) => `<rect x="${x}" y="${y}" width="${w}" height="${h}"/>`).join('');
const drawing = (key, offset, bars, height) => `<svg class="notes" viewBox="${offset} 16 ${bars} ${height}" preserveAspectRatio="none">${rects(key)}</svg>`;
const nameBar = (text, icon) => `<div class="name"><svg><use href="#${icon}"/></svg><span>${text}</span></div>`;

const clipHtml = ([bar, bars, name, key, offset], height) => {
  const tint = key === 'riser' ? ' violet' : key === 'wet' ? ' slate' : bars < 1 ? ' half' : '';
  const icon = waves[key] ? 'wave-mark' : 'clip-icon';
  return `<div class="clip${tint}" style="grid-column:${bar * 2 - 1} / span ${bars * 2}">${nameBar(name, icon)}${drawing(key, offset, bars, height)}</div>`;
};

document.getElementById('tracks').innerHTML = lanes.map((clips, i) => {
  const short = i === 10;
  return `<div class="track${short ? ' short' : ''}"><div class="thead${i === 15 ? ' dim' : ''}"><label for="t${i}">Track ${i + 1}</label><small>...</small><input class="led" type="checkbox" id="t${i}" checked></div><div class="pre"></div><div class="lane">${clips.map(c => clipHtml(c, short ? 37 : 41)).join('')}</div></div>`;
}).join('');

document.getElementById('patterns').innerHTML = picker.map(([name, key]) => `<li>${nameBar(name, 'clip-icon')}${drawing(key, 0, 8, 42)}</li>`).join('');

document.getElementById('ruler').innerHTML = Array.from({ length: 33 }, (_, i) => `<span${i % 2 ? '' : ' class="four"'}>${i * 2 + 1}</span>`).join('');

document.getElementById('overview').innerHTML = lanes.map((clips, i) => clips.map(([bar, bars]) =>
  `<rect x="${bar - 1}" y="${1 + i * 1.15}" width="${bars - .08}" height="1.2" fill="${i === 13 || i === 14 ? '#77758a' : i % 3 ? '#7c8b91' : '#728187'}"/>`).join('')).join('');

// Names that are too long for their clip step down to the smaller faces.
const fitNames = () => document.querySelectorAll('.name').forEach(el => {
  el.classList.remove('fit-a', 'fit-b');
  for (const step of ['fit-a', 'fit-b']) {
    if (el.scrollWidth <= el.clientWidth) break;
    el.classList.remove('fit-a');
    el.classList.add(step);
  }
});
fitNames();
addEventListener('resize', fitNames);
```
